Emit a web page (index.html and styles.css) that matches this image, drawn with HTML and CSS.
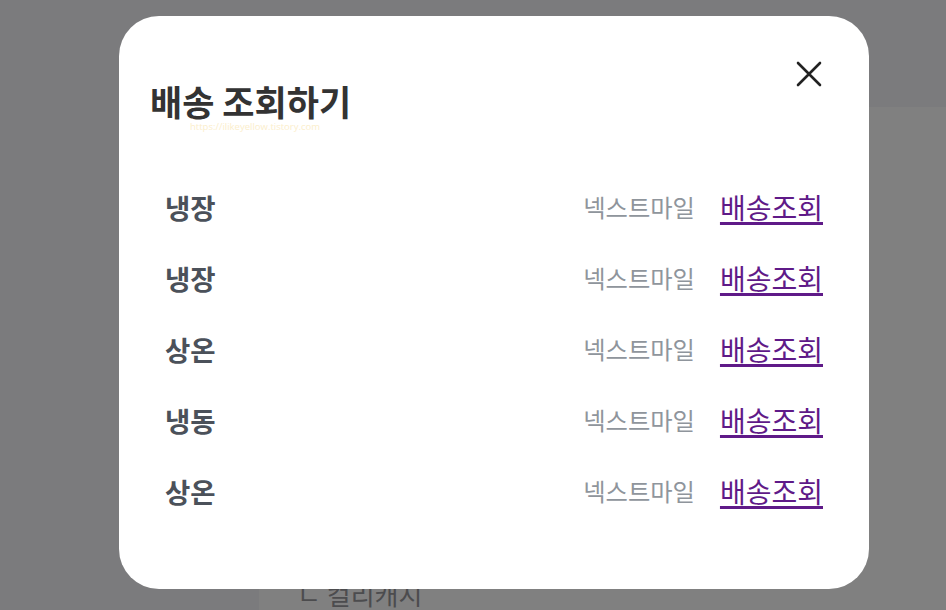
FILE: index.html
```html
<!DOCTYPE html>
<html>
  <head>
    <meta charset="utf-8">
    <title>배송 조회하기</title>
    <link rel="stylesheet" href="styles.css">
  </head>
  <body>
    <div class="page">
      <div class="page-top"></div>
      <div class="page-body">
        <div class="page-side"></div>
        <div class="page-panel">
          <p class="panel-item">ㄴ 컬리캐시</p>
        </div>
      </div>
    </div>

    <div class="modal">
      <div class="modal-head">
        <h2 class="modal-title">배송 조회하기</h2>
        <button class="modal-close" type="button" aria-label="닫기">
          <svg width="26" height="26" viewBox="0 0 26 26">
            <path d="M2 2 L24 24 M24 2 L2 24" stroke="#222" stroke-width="2.6" stroke-linecap="round" fill="none"/>
          </svg>
        </button>
      </div>
      <p class="watermark">https://ilikeyellow.tistory.com</p>
      <ul class="track-list">
        <li class="track-row">
          <span class="track-type">냉장</span>
          <span class="track-info"><span class="track-courier">넥스트마일</span><a class="track-link" href="#">배송조회</a></span>
        </li>
        <li class="track-row">
          <span class="track-type">냉장</span>
          <span class="track-info"><span class="track-courier">넥스트마일</span><a class="track-link" href="#">배송조회</a></span>
        </li>
        <li class="track-row">
          <span class="track-type">상온</span>
          <span class="track-info"><span class="track-courier">넥스트마일</span><a class="track-link" href="#">배송조회</a></span>
        </li>
        <li class="track-row">
          <span class="track-type">냉동</span>
          <span class="track-info"><span class="track-courier">넥스트마일</span><a class="track-link" href="#">배송조회</a></span>
        </li>
        <li class="track-row">
          <span class="track-type">상온</span>
          <span class="track-info"><span class="track-courier">넥스트마일</span><a class="track-link" href="#">배송조회</a></span>
        </li>
      </ul>
    </div>
  </body>
</html>
```

FILE: styles.css
```css
html, body {
  margin: 0;
  height: 610px;
  overflow: hidden;
}
body {
  background: #7b7b7d;
  font-family: "Noto Sans CJK KR", "Noto Sans", sans-serif;
}
.page-top {
  height: 107px;
}
.page-body {
  display: flex;
  height: 503px;
}
.page-side {
  width: 259px;
  flex-shrink: 0;
}
.page-panel {
  flex: 1;
  background: #808080;
  padding-left: 38px;
}
.panel-item {
  margin: 467px 0 0 0;
  font-size: 26px;
  line-height: 40px;
  color: #4c4c4e;
}

.modal {
  position: absolute;
  left: 119px;
  top: 16px;
  width: 750px;
  height: 573px;
  background: #fff;
  border-radius: 40px;
  box-sizing: border-box;
  padding: 0 46px 0 31px;
}
.modal-head {
  display: flex;
  justify-content: space-between;
  align-items: flex-start;
}
.modal-title {
  margin: 67px 0 0 0;
  font-size: 35px;
  line-height: 36px;
  font-weight: 700;
  color: #333;
}
.modal-close {
  margin: 43px -1px 0 0;
  padding: 2px;
  border: 0;
  background: none;
  width: 30px;
  height: 30px;
}
.watermark {
  margin: 1px 0 0 40px;
  font-size: 9.5px;
  line-height: 13px;
  color: #fbeecb;
  font-family: "Open Sans", sans-serif;
}
.track-list {
  list-style: none;
  margin: 38px 0 0 15px;
  padding: 0;
}
.track-row {
  display: flex;
  justify-content: space-between;
  align-items: center;
  height: 71px;
}
.track-type {
  font-size: 27.5px;
  font-weight: 700;
  color: #4b515a;
}
.track-info {
  display: flex;
  align-items: center;
  gap: 25px;
}
.track-courier {
  font-size: 24.3px;
  color: #8f959c;
}
.track-link {
  font-size: 28px;
  color: #5f1a88;
  text-decoration: underline;
  text-decoration-thickness: 3px;
  text-underline-offset: 3px;
}
```
